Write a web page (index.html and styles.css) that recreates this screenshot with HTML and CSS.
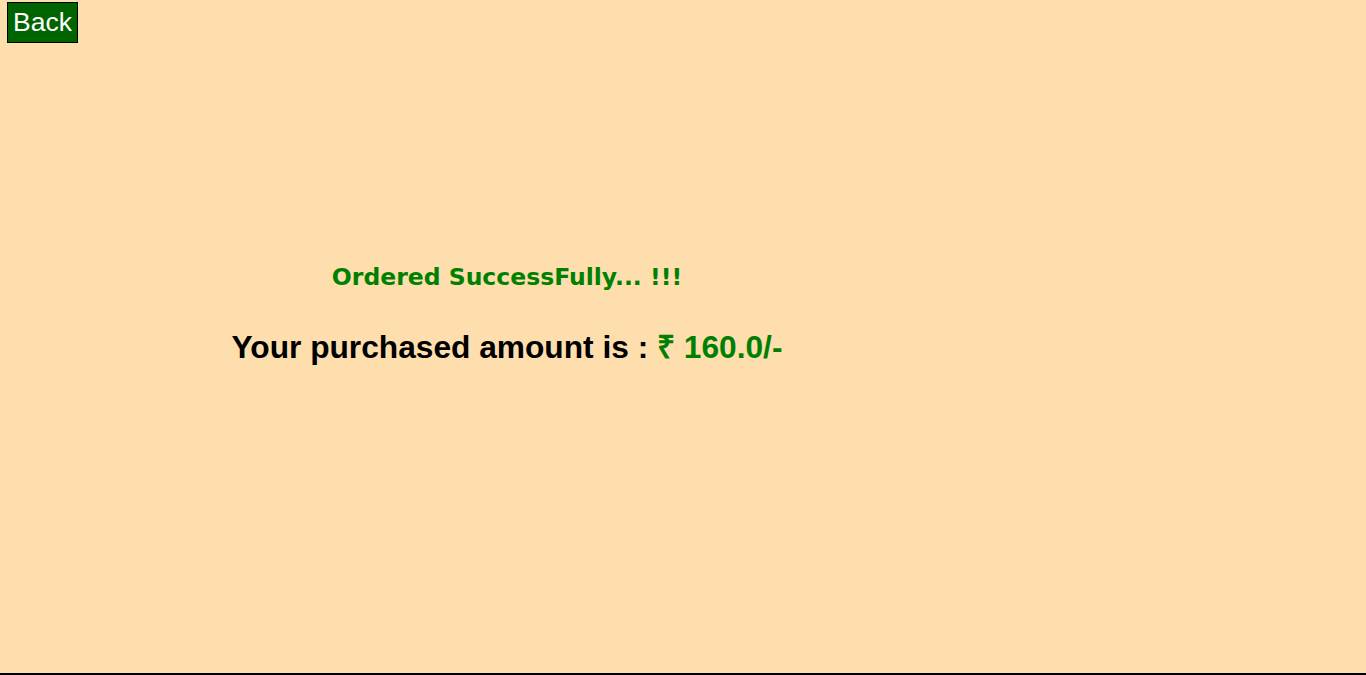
FILE: index.html
```html
<!DOCTYPE html>
<html>
<head>
<meta charset="utf-8">
<link rel="stylesheet" href="styles.css">
</head>
<body>
<div class="page">
  <button class="back">Back</button>
  <div class="content">
    <h2 class="success">Ordered SuccessFully... !!!</h2>
    <h1 class="amount">Your purchased amount is : <span class="price">₹ 160.0/-</span></h1>
  </div>
</div>
</body>
</html>
```
FILE: styles.css
```css
html, body {
  margin: 0;
  padding: 0;
  background: #fedead;
}
.page {
  height: 100vh;
  box-sizing: border-box;
  border-bottom: 2px solid #000;
  padding-top: 2px;
  padding-left: 7px;
}
.back {
  display: block;
  background: #006400;
  color: #fff;
  border: 1px solid #000;
  font-family: "Liberation Sans", Arial, sans-serif;
  font-size: 26.5px;
  padding: 0 4px;
  height: 41px;
  width: 71px;
  margin: 0;
  cursor: pointer;
}
.content {
  width: 1000px;
  text-align: center;
  padding-top: 217px;
}
.success {
  margin: 0;
  color: #008000;
  font-family: "Comic Sans MS", "DejaVu Sans", sans-serif;
  font-weight: bold;
  font-size: 23.5px;
  line-height: 34px;
}
.amount {
  margin: 36px 0 0;
  color: #000;
  font-family: "Liberation Sans", Arial, sans-serif;
  font-weight: bold;
  font-size: 31.7px;
  line-height: 34px;
}
.price {
  color: #008000;
}
```
